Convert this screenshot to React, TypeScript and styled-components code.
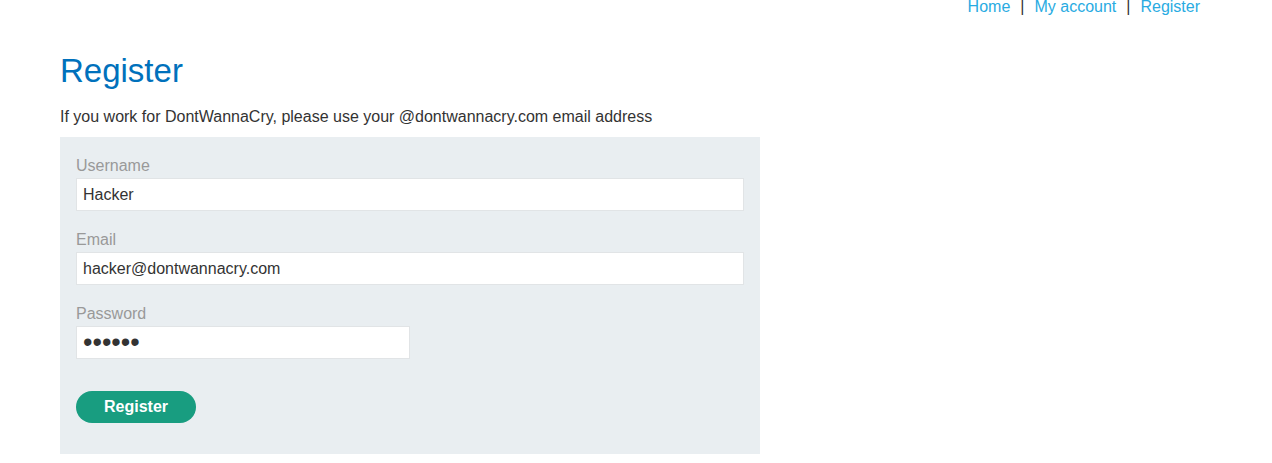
import styled, { createGlobalStyle } from 'styled-components'

const GlobalStyle = createGlobalStyle`
body {
  margin: 0;
  background: #fff;
  font-family: "Liberation Sans", Arial, sans-serif;
  color: #333;
}
`

const App = () => {
    return (
        <Page>
            <GlobalStyle />
            <TopNav>
                <NavLink href="#">Home</NavLink>
                <Sep>|</Sep>
                <NavLink href="#">My account</NavLink>
                <Sep>|</Sep>
                <NavLink href="#">Register</NavLink>
            </TopNav>

            <Title>Register</Title>
            <Intro>If you work for DontWannaCry, please use your @dontwannacry.com email address</Intro>

            <Panel>
                <Field>
                    <Label>Username</Label>
                    <Input type="text" defaultValue="Hacker" />
                </Field>
                <Field>
                    <Label>Email</Label>
                    <Input type="text" defaultValue="hacker@dontwannacry.com" />
                </Field>
                <Field>
                    <Label>Password</Label>
                    <Input type="password" defaultValue="hacker" $half />
                </Field>
                <Button>Register</Button>
            </Panel>
        </Page>
    )
}

export default App

const Page = styled.div`
width: 1140px;
margin-left: 60px;
`

const TopNav = styled.nav`
display: flex;
justify-content: flex-end;
font-size: 16px;
line-height: 13px;
height: 13px;
`

const NavLink = styled.a`
color: #29abe2;
text-decoration: none;
`

const Sep = styled.span`
padding: 0 10px;
color: #333;
`

const Title = styled.h1`
margin: 40px 0 0;
font-size: 33px;
line-height: 36px;
font-weight: 400;
color: #0071bc;
`

const Intro = styled.p`
margin: 18px 0 0;
font-size: 16px;
line-height: 20px;
`

const Panel = styled.form`
width: 700px;
box-sizing: border-box;
margin-top: 10px;
padding: 18px 16px 31px;
background: #e9eef1;
`

const Field = styled.div`
display: flex;
flex-direction: column;
align-items: flex-start;
margin-bottom: 18px;
`

const Label = styled.label`
font-size: 16px;
line-height: 22px;
color: #999;
margin-bottom: 1px;
`

const Input = styled.input<{ $half?: boolean }>`
width: ${p => (p.$half ? '334px' : '668px')};
height: 33px;
box-sizing: border-box;
border: 1px solid #e1e4e6;
background: #fff;
padding: 0 6px;
font-family: "Liberation Sans", Arial, sans-serif;
font-size: ${p => (p.type === 'password' ? '27px' : '16px')};
color: #333;
outline: none;
`

const Button = styled.button`
margin-top: 14px;
width: 120px;
height: 32px;
border: none;
border-radius: 16px;
background: #189d80;
color: #fff;
font-family: "Liberation Sans", Arial, sans-serif;
font-size: 16px;
font-weight: 700;
cursor: pointer;
`
